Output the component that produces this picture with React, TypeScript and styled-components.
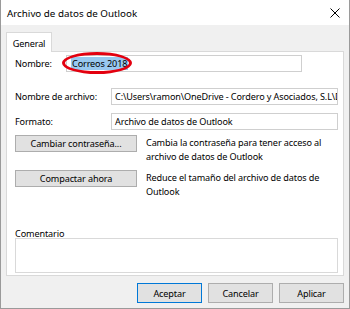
import React from "react";
import styled, { createGlobalStyle } from "styled-components";

const Global = createGlobalStyle`
  html, body { margin: 0; padding: 0; background: #ffffff; }
  body {
    font-family: "Noto Sans", "Open Sans", Arial, sans-serif;
    font-size: 9.1px;
    letter-spacing: -0.12px;
    color: #000;
  }
  * { box-sizing: border-box; }
`;

const Window = styled.div`
  width: 350px;
  height: 309px;
  display: flex;
  flex-direction: column;
  border-left: 1px solid #9a9a9a;
  border-right: 1px solid #9a9a9a;
  border-bottom: 1px solid #9a9a9a;
  background: #f0f0f0;
  overflow: hidden;
`;

const TitleBar = styled.div`
  height: 25px;
  flex: none;
  background: #ffffff;
  display: flex;
  align-items: center;
  justify-content: space-between;
  padding: 1px 9px 0 6px;
  font-size: 9.8px;
  letter-spacing: 0;
`;

const Close = styled.svg`
  width: 10px;
  height: 10px;
  display: block;
`;

const Body = styled.div`
  flex: 1;
  display: flex;
  flex-direction: column;
  padding: 7px 5px 0 5px;
`;

const Tabs = styled.div`
  display: flex;
  height: 20px;
  position: relative;
  z-index: 1;
  margin-bottom: -1px;
`;

const Tab = styled.div`
  width: 46px;
  height: 20px;
  background: #ffffff;
  border: 1px solid #d9d9d9;
  border-bottom: none;
  display: flex;
  align-items: center;
  justify-content: center;
  padding-top: 1px;
`;

const Panel = styled.div`
  height: 225px;
  background: #ffffff;
  border: 1px solid #d9d9d9;
  display: flex;
  flex-direction: column;
  padding: 3px 4px 0 8px;
`;

const FieldRow = styled.div<{ $mt: number }>`
  display: flex;
  align-items: center;
  height: 17px;
  margin-top: ${(p) => p.$mt}px;
  position: relative;
`;

const Label = styled.div<{ $w: number }>`
  width: ${(p) => p.$w}px;
  flex: none;
  white-space: nowrap;
`;

const Input = styled.div<{ $w: number }>`
  width: ${(p) => p.$w}px;
  height: 17px;
  border: 1px solid #cfcfcf;
  background: #ffffff;
  display: flex;
  align-items: center;
  padding-left: 3px;
  white-space: nowrap;
  overflow: hidden;
`;

const Selected = styled.span`
  background: #99c9ef;
  padding: 0 1px;
  margin-left: 1px;
  line-height: 13px;
`;

const Ellipse = styled.div`
  position: absolute;
  left: 47px;
  top: -3px;
  width: 70px;
  height: 22px;
  border: 3px solid #e3000f;
  border-radius: 50%;
  pointer-events: none;
`;

const ActionRow = styled.div<{ $mt: number }>`
  display: flex;
  align-items: flex-start;
  margin-top: ${(p) => p.$mt}px;
`;

const Button = styled.div<{ $w: number; $default?: boolean }>`
  width: ${(p) => p.$w}px;
  height: ${(p) => (p.$default !== undefined ? 20 : 17)}px;
  flex: none;
  background: #e1e1e1;
  border: 1px solid ${(p) => (p.$default ? "#0078d7" : "#adadad")};
  display: flex;
  align-items: center;
  justify-content: center;
  white-space: nowrap;
`;

const Desc = styled.div`
  margin-left: 9px;
  line-height: 14px;
  margin-top: 1px;
  width: 190px;
`;

const CommentLabel = styled.div`
  margin-top: auto;
  line-height: 9px;
`;

const CommentBox = styled.div`
  height: 35px;
  width: 323px;
  border: 1px solid #d9d9d9;
  background: #ffffff;
  margin: 0 0 2px 0;
`;

const Footer = styled.div`
  display: flex;
  justify-content: flex-end;
  gap: 6px;
  padding: 7px 0 0 0;
`;

export default function App() {
  return (
    <>
      <Global />
      <Window>
        <TitleBar>
          <span>Archivo de datos de Outlook</span>
          <Close viewBox="0 0 10 10">
            <path d="M0.5 0.5 L9.5 9.5 M9.5 0.5 L0.5 9.5" stroke="#000" strokeWidth="1" fill="none" />
          </Close>
        </TitleBar>
        <Body>
          <Tabs>
            <Tab>General</Tab>
          </Tabs>
          <Panel>
            <FieldRow $mt={0}>
              <Label $w={51}>Nombre:</Label>
              <Input $w={236}>
                <Selected>Correos 2018</Selected>
              </Input>
              <Ellipse />
            </FieldRow>
            <FieldRow $mt={16}>
              <Label $w={96}>Nombre de archivo:</Label>
              <Input $w={227}>C:\Users\ramon\OneDrive - Cordero y Asociados, S.L\Documentos</Input>
            </FieldRow>
            <FieldRow $mt={8}>
              <Label $w={96}>Formato:</Label>
              <Input $w={227}>Archivo de datos de Outlook</Input>
            </FieldRow>
            <ActionRow $mt={5}>
              <Button $w={122}>Cambiar contraseña...</Button>
              <Desc>Cambia la contraseña para tener acceso al archivo de datos de Outlook</Desc>
            </ActionRow>
            <ActionRow $mt={6}>
              <Button $w={122}>Compactar ahora</Button>
              <Desc>Reduce el tamaño del archivo de datos de Outlook</Desc>
            </ActionRow>
            <CommentLabel>Comentario</CommentLabel>
            <CommentBox />
          </Panel>
          <Footer>
            <Button $w={65} $default={true}>Aceptar</Button>
            <Button $w={65} $default={false}>Cancelar</Button>
            <Button $w={65} $default={false}>Aplicar</Button>
          </Footer>
        </Body>
      </Window>
    </>
  );
}
